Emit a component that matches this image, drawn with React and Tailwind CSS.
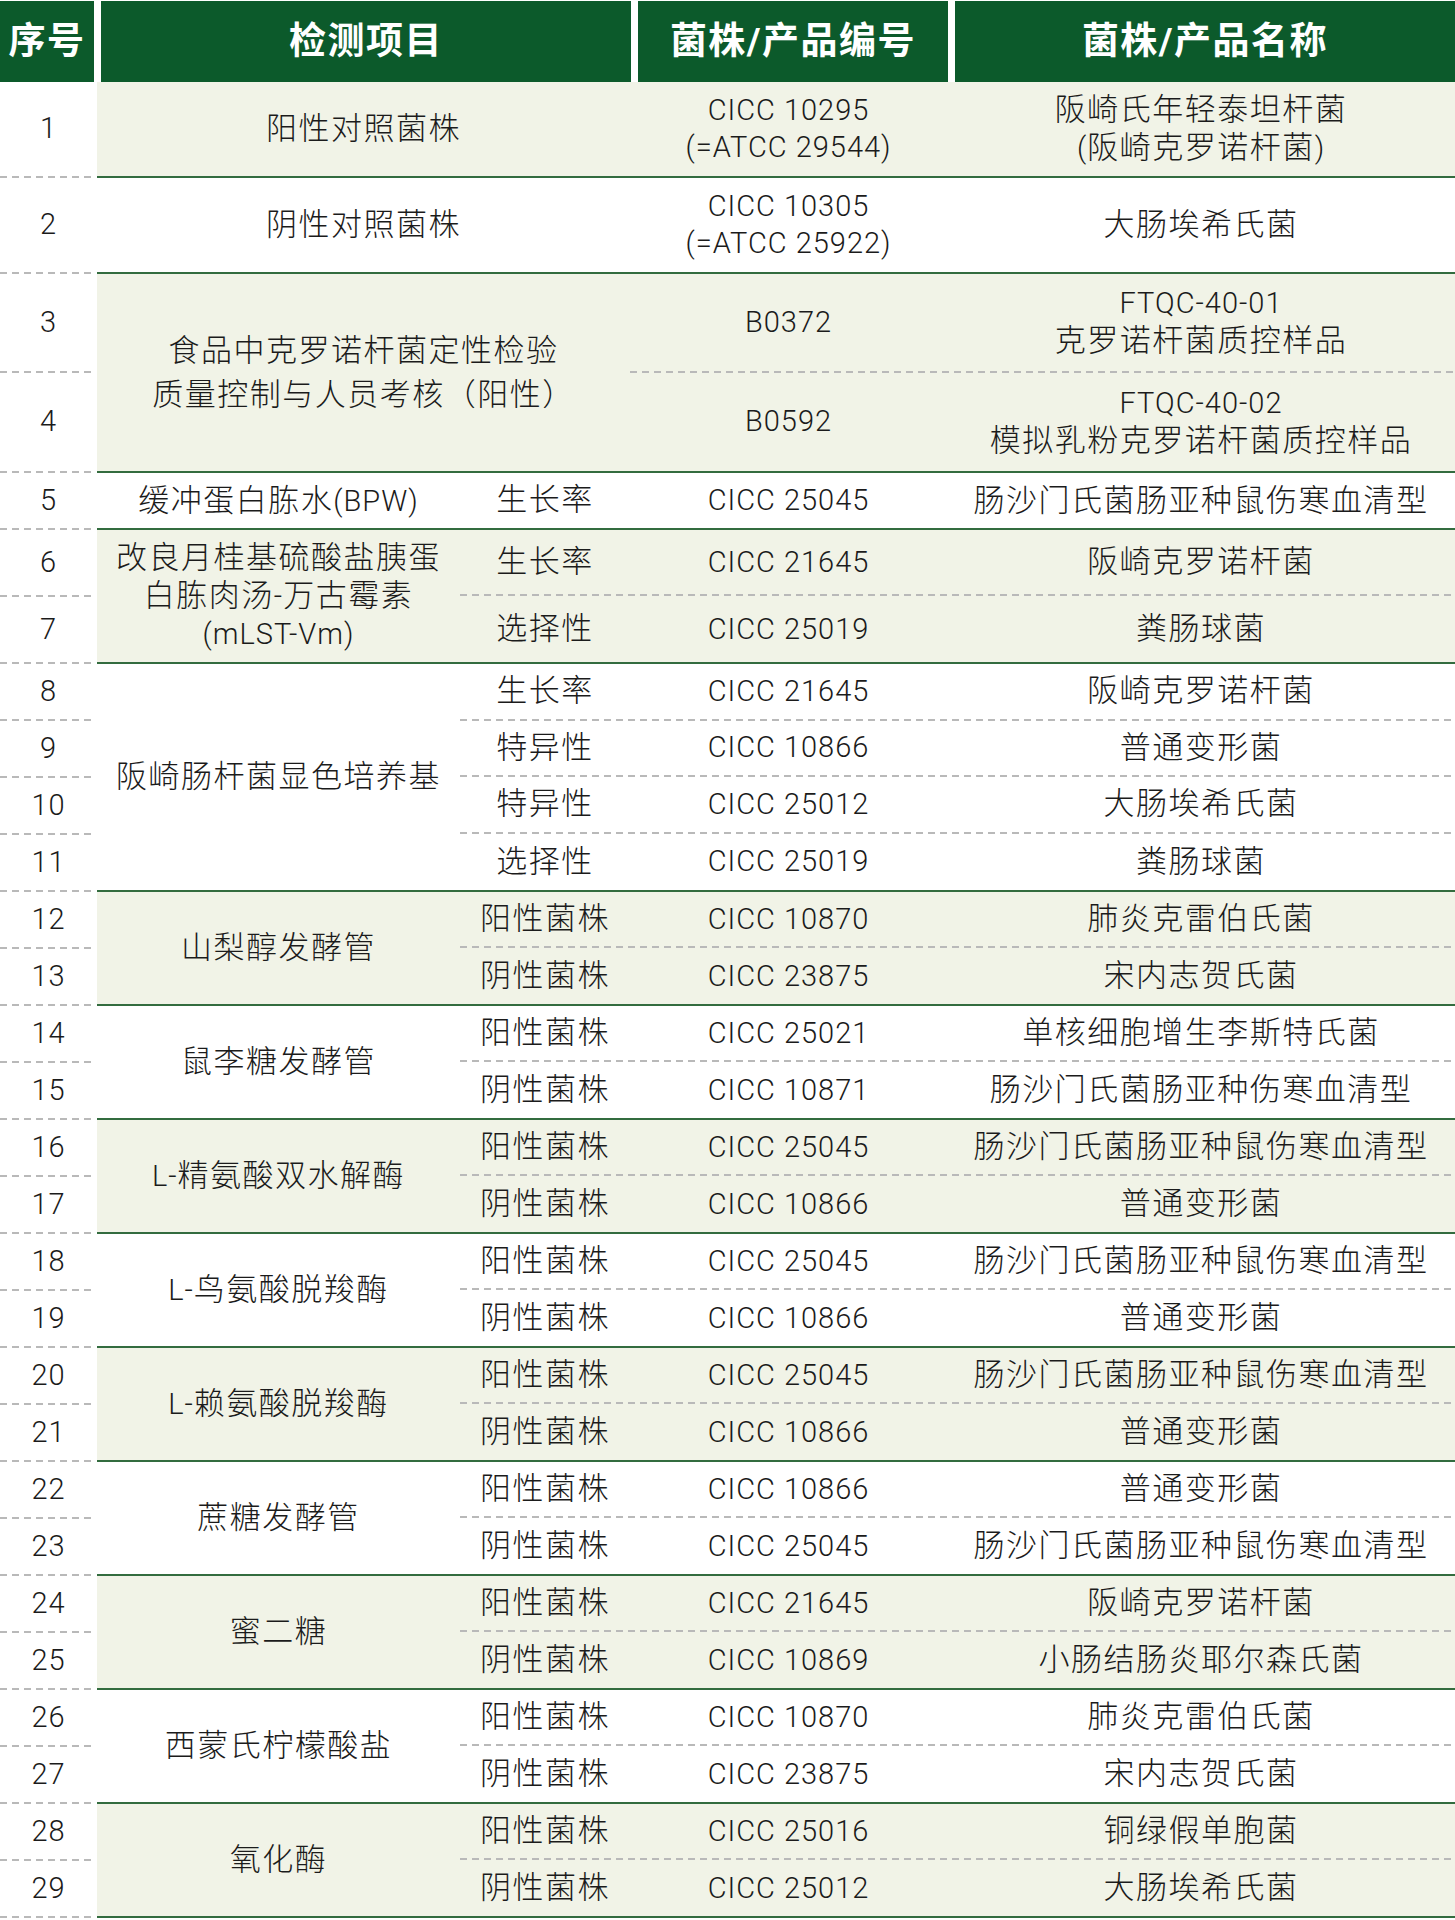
import React from "react";

const TINT = "bg-[#f1f3e7]";

const groups = [
  {
    tint: true,
    wide: true,
    item: ["阳性对照菌株"],
    rows: [
      { n: 1, h: "h-[96px]", code: ["CICC 10295", "(=ATCC 29544)"], name: ["阪崎氏年轻泰坦杆菌", "(阪崎克罗诺杆菌)"] },
    ],
  },
  {
    wide: true,
    item: ["阴性对照菌株"],
    rows: [{ n: 2, h: "h-[96px]", code: ["CICC 10305", "(=ATCC 25922)"], name: ["大肠埃希氏菌"] }],
  },
  {
    tint: true,
    wide: true,
    itemLeading: "leading-[44px]",
    item: ["食品中克罗诺杆菌定性检验", "质量控制与人员考核（阳性）"],
    rows: [
      { n: 3, h: "h-[99px]", code: ["B0372"], name: ["FTQC-40-01", "克罗诺杆菌质控样品"] },
      { n: 4, h: "h-[100px]", code: ["B0592"], name: ["FTQC-40-02", "模拟乳粉克罗诺杆菌质控样品"] },
    ],
  },
  {
    item: ["缓冲蛋白胨水(BPW)"],
    rows: [{ n: 5, type: "生长率", code: ["CICC 25045"], name: ["肠沙门氏菌肠亚种鼠伤寒血清型"] }],
  },
  {
    tint: true,
    item: ["改良月桂基硫酸盐胰蛋", "白胨肉汤-万古霉素", "(mLST-Vm)"],
    rows: [
      { n: 6, h: "h-[67px]", type: "生长率", code: ["CICC 21645"], name: ["阪崎克罗诺杆菌"] },
      { n: 7, h: "h-[67px]", type: "选择性", code: ["CICC 25019"], name: ["粪肠球菌"] },
    ],
  },
  {
    item: ["阪崎肠杆菌显色培养基"],
    rows: [
      { n: 8, type: "生长率", code: ["CICC 21645"], name: ["阪崎克罗诺杆菌"] },
      { n: 9, type: "特异性", code: ["CICC 10866"], name: ["普通变形菌"] },
      { n: 10, type: "特异性", code: ["CICC 25012"], name: ["大肠埃希氏菌"] },
      { n: 11, type: "选择性", code: ["CICC 25019"], name: ["粪肠球菌"] },
    ],
  },
  {
    tint: true,
    item: ["山梨醇发酵管"],
    rows: [
      { n: 12, type: "阳性菌株", code: ["CICC 10870"], name: ["肺炎克雷伯氏菌"] },
      { n: 13, type: "阴性菌株", code: ["CICC 23875"], name: ["宋内志贺氏菌"] },
    ],
  },
  {
    item: ["鼠李糖发酵管"],
    rows: [
      { n: 14, type: "阳性菌株", code: ["CICC 25021"], name: ["单核细胞增生李斯特氏菌"] },
      { n: 15, type: "阴性菌株", code: ["CICC 10871"], name: ["肠沙门氏菌肠亚种伤寒血清型"] },
    ],
  },
  {
    tint: true,
    item: ["L-精氨酸双水解酶"],
    rows: [
      { n: 16, type: "阳性菌株", code: ["CICC 25045"], name: ["肠沙门氏菌肠亚种鼠伤寒血清型"] },
      { n: 17, type: "阴性菌株", code: ["CICC 10866"], name: ["普通变形菌"] },
    ],
  },
  {
    item: ["L-鸟氨酸脱羧酶"],
    rows: [
      { n: 18, type: "阳性菌株", code: ["CICC 25045"], name: ["肠沙门氏菌肠亚种鼠伤寒血清型"] },
      { n: 19, type: "阴性菌株", code: ["CICC 10866"], name: ["普通变形菌"] },
    ],
  },
  {
    tint: true,
    item: ["L-赖氨酸脱羧酶"],
    rows: [
      { n: 20, type: "阳性菌株", code: ["CICC 25045"], name: ["肠沙门氏菌肠亚种鼠伤寒血清型"] },
      { n: 21, type: "阴性菌株", code: ["CICC 10866"], name: ["普通变形菌"] },
    ],
  },
  {
    item: ["蔗糖发酵管"],
    rows: [
      { n: 22, type: "阳性菌株", code: ["CICC 10866"], name: ["普通变形菌"] },
      { n: 23, type: "阴性菌株", code: ["CICC 25045"], name: ["肠沙门氏菌肠亚种鼠伤寒血清型"] },
    ],
  },
  {
    tint: true,
    item: ["蜜二糖"],
    rows: [
      { n: 24, type: "阳性菌株", code: ["CICC 21645"], name: ["阪崎克罗诺杆菌"] },
      { n: 25, type: "阴性菌株", code: ["CICC 10869"], name: ["小肠结肠炎耶尔森氏菌"] },
    ],
  },
  {
    item: ["西蒙氏柠檬酸盐"],
    rows: [
      { n: 26, type: "阳性菌株", code: ["CICC 10870"], name: ["肺炎克雷伯氏菌"] },
      { n: 27, type: "阴性菌株", code: ["CICC 23875"], name: ["宋内志贺氏菌"] },
    ],
  },
  {
    tint: true,
    item: ["氧化酶"],
    rows: [
      { n: 28, type: "阳性菌株", code: ["CICC 25016"], name: ["铜绿假单胞菌"] },
      { n: 29, type: "阴性菌株", code: ["CICC 25012"], name: ["大肠埃希氏菌"] },
    ],
  },
];

// latin runs are set tighter and a bit smaller than the CJK runs
function Txt({ text }) {
  const parts = text.split(/([\x00-\x7F]+)/).filter(Boolean);
  return (
    <>
      {parts.map((p, i) => (
        <span
          key={i}
          className={/^[\x00-\x7F]+$/.test(p) ? "tracking-[1px]" : "text-[31px] tracking-[1.5px]"}
        >
          {p}
        </span>
      ))}
    </>
  );
}

function Lines({ lines, className = "leading-[38px]" }) {
  return (
    <div className={"flex flex-col items-center justify-center text-center " + className}>
      {lines.map((l, i) => (
        <div key={i} className="whitespace-nowrap">
          <Txt text={l} />
        </div>
      ))}
    </div>
  );
}

function Dashes() {
  return <div className="h-[2px] w-full bg-[repeating-linear-gradient(90deg,#b9b9b9_0_7px,transparent_7px_12px)]" />;
}

function Group({ g }) {
  return (
    <div className="flex">
      <div className="w-[97px] shrink-0 flex flex-col bg-white">
        {g.rows.map((r) => (
          <div key={r.n} className={"flex flex-col " + (r.h || "h-[57px]")}>
            <div className="flex-1 flex items-center justify-center tracking-[1px]">{r.n}</div>
            <div className="w-[95px]">
              <Dashes />
            </div>
          </div>
        ))}
      </div>
      <div className={"flex-1 flex border-b-2 border-[#336c3f] " + (g.tint ? TINT : "bg-white")}>
        <div className={(g.wide ? "w-[533px]" : "w-[363px]") + " shrink-0 flex items-center justify-center"}>
          <Lines lines={g.item} className={g.itemLeading || "leading-[38px]"} />
        </div>
        <div className="flex-1 flex flex-col">
          {g.rows.map((r, i) => (
            <div key={r.n} className="flex-1 flex flex-col">
              <div className="flex-1 flex">
                {!g.wide && (
                  <div className="w-[170px] shrink-0 flex items-center justify-center">
                    <Txt text={r.type} />
                  </div>
                )}
                <div className="w-[317px] shrink-0 flex items-center justify-center">
                  <Lines lines={r.code} className="leading-[37px]" />
                </div>
                <div className="flex-1 flex items-center justify-center">
                  <Lines lines={r.name} className="leading-[38px]" />
                </div>
              </div>
              {i < g.rows.length - 1 && <Dashes />}
            </div>
          ))}
        </div>
      </div>
    </div>
  );
}

export default function App() {
  return (
    <div className="w-[1455px] bg-white text-[#1b1b1b] text-[29px] font-light font-['Roboto','Noto_Sans_CJK_SC',sans-serif]">
      <div className="flex gap-[7px] h-[82px] pt-px text-white text-[37px] font-bold tracking-[1.5px]">
        <div className="w-[94px] bg-[#0c5a2b] flex items-center justify-center">序号</div>
        <div className="w-[530px] bg-[#0c5a2b] flex items-center justify-center">检测项目</div>
        <div className="w-[310px] bg-[#0c5a2b] flex items-center justify-center">菌株/产品编号</div>
        <div className="flex-1 bg-[#0c5a2b] flex items-center justify-center">菌株/产品名称</div>
      </div>
      {groups.map((g, i) => (
        <Group key={i} g={g} />
      ))}
    </div>
  );
}
